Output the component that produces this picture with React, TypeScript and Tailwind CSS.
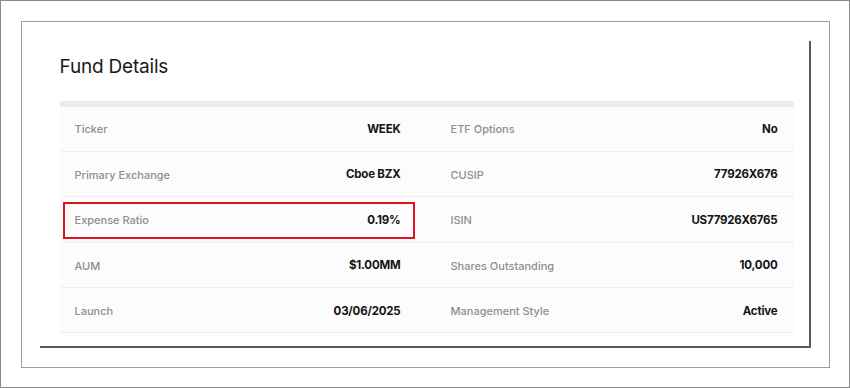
import React from "react";

const rows: [string, string, string, string][] = [
  ["Ticker", "WEEK", "ETF Options", "No"],
  ["Primary Exchange", "Cboe BZX", "CUSIP", "77926X676"],
  ["Expense Ratio", "0.19%", "ISIN", "US77926X6765"],
  ["AUM", "$1.00MM", "Shares Outstanding", "10,000"],
  ["Launch", "03/06/2025", "Management Style", "Active"],
];

function Cell({ label, value, highlight }: { label: string; value: string; highlight?: boolean }) {
  return (
    <div className="relative flex h-full items-center justify-between px-[15px] pt-[2px]">
      <span className="text-[11px] font-medium text-[#8e8e8e]">{label}</span>
      <span className="text-[11.5px] font-bold text-[#141414] tracking-[-0.2px]">{value}</span>
      {highlight && (
        <div className="absolute left-[3px] right-[1px] top-[5px] bottom-[3px] border-2 border-[#e0121f]" />
      )}
    </div>
  );
}

export default function App() {
  return (
    <div
      className="w-[850px] h-[388px] bg-white border-[1.5px] border-[#8a8a8a] p-[19.5px]"
      style={{ fontFamily: "Inter, 'Noto Sans', sans-serif" }}
    >
      <div className="h-full border border-[#9c9c9c] pt-[19px] pb-[19px] pl-[18px] pr-[18px]">
        <div className="h-full bg-white border-r-2 border-b-2 border-[#5a5a5a] pl-[20px] pr-[15px]">
          <div className="pt-[12px] h-[60px]">
            <h2 className="text-[19px] leading-[28px] font-normal text-[#1a1a1a] tracking-[-0.2px]">Fund Details</h2>
          </div>
          <div className="h-[6px] bg-[#ececec]" />
          <div className="flex flex-col">
            {rows.map((r, i) => (
              <div
                key={i}
                className="grid grid-cols-[356px_357px] gap-x-[20px] h-[45.4px] border-b border-[#f0f0f0] bg-[#fcfcfc]"
              >
                <Cell label={r[0]} value={r[1]} highlight={i === 2} />
                <Cell label={r[2]} value={r[3]} />
              </div>
            ))}
          </div>
        </div>
      </div>
    </div>
  );
}
